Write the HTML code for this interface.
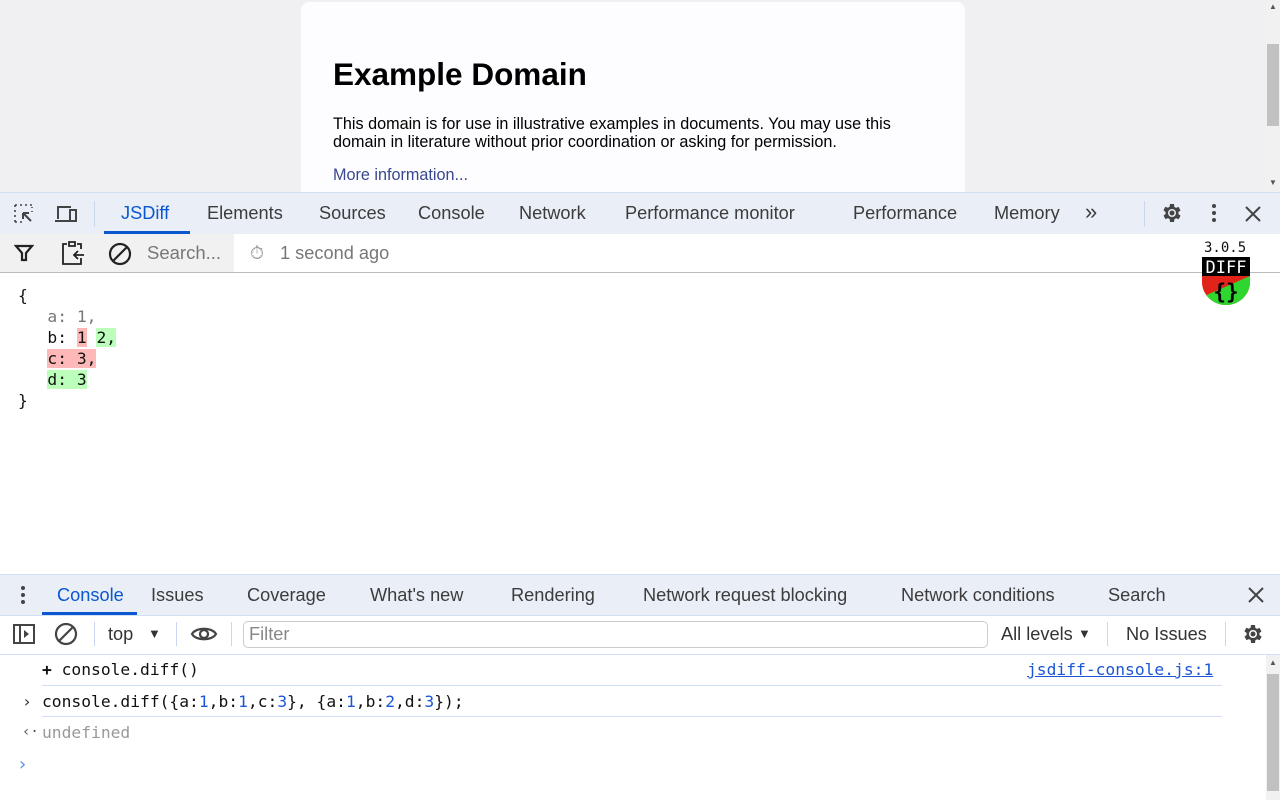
<!DOCTYPE html>
<html><head><meta charset="utf-8"><style>
*{margin:0;padding:0;box-sizing:border-box}
body{width:1280px;height:800px;overflow:hidden;position:relative;background:#fff;font-family:"Liberation Sans",sans-serif;color:#1f1f1f}
.a{position:absolute;white-space:nowrap}
.mono{font-family:"DejaVu Sans Mono","Liberation Mono",monospace;font-size:16.3px}
.tab{position:absolute;font-size:18.2px;color:#3c3c3c;top:0;line-height:40px}
svg{position:absolute}
</style></head><body>
<div class="a" style="left:0;top:0;width:1280px;height:193px;background:#f0f0f2"></div>
<div class="a" style="left:301px;top:2px;width:664px;height:200px;background:#fdfdff;border-radius:8px"></div>
<div class="a" style="left:333px;top:56px;font-size:31.5px;font-weight:bold;color:#000">Example Domain</div>
<div class="a" style="left:333px;top:115px;font-size:16.2px;line-height:18px;color:#000">This domain is for use in illustrative examples in documents. You may use this<br>domain in literature without prior coordination or asking for permission.</div>
<div class="a" style="left:333px;top:166px;font-size:16.2px;color:#38488f">More information...</div>
<div class="a" style="left:1266px;top:0;width:14px;height:193px;background:#f1f1f1"></div>
<div class="a" style="left:1267px;top:44px;width:12px;height:82px;background:#c1c1c1"></div>
<div class="a" style="left:1269px;top:2px;font-size:8px;color:#555">▲</div>
<div class="a" style="left:1269px;top:178px;font-size:8px;color:#555">▼</div>
<div class="a" style="left:0;top:192px;width:1280px;height:42px;background:#e9eef7;border-top:1px solid #d1e0f7"></div>
<svg style="left:12px;top:202px" width="24" height="24" viewBox="0 0 24 24" fill="none" stroke="#444" stroke-width="2"><path d="M3 3h2M8 3h2M13 3h2M18 3h2M3 3v2M3 8v2M3 13v2M3 18v2M3 20h2M8 20h2M20 5v1M20 9v1" stroke-width="1.6"/><path d="M11 11l8 8M11 11h6M11 11v6"/></svg>
<svg style="left:54px;top:202px" width="26" height="24" viewBox="0 0 26 24" fill="none" stroke="#444" stroke-width="2"><path d="M4 17V5h13M1 19h14"/><rect x="16" y="8" width="6" height="11"/></svg>
<div class="a" style="left:94px;top:201px;width:1px;height:26px;background:#cbd7ef"></div>
<div class="tab" style="left:121px;top:193px;color:#0b57d0">JSDiff</div>
<div class="a" style="left:104px;top:231px;width:86px;height:3px;background:#0b57d0"></div>
<div class="tab" style="left:207px;top:193px">Elements</div>
<div class="tab" style="left:319px;top:193px">Sources</div>
<div class="tab" style="left:418px;top:193px">Console</div>
<div class="tab" style="left:519px;top:193px">Network</div>
<div class="tab" style="left:625px;top:193px">Performance monitor</div>
<div class="tab" style="left:853px;top:193px">Performance</div>
<div class="tab" style="left:994px;top:193px">Memory</div>
<div class="tab" style="left:1085px;top:192px;font-size:22px;letter-spacing:-3px">»</div>
<div class="a" style="left:1144px;top:201px;width:1px;height:26px;background:#cbd7ef"></div>
<svg style="left:1160px;top:201px" width="24" height="24" viewBox="0 0 24 24"><path fill="#444" d="M19.4 13a7.5 7.5 0 000-2l2.1-1.6-2-3.5-2.5 1a7.6 7.6 0 00-1.7-1L15 3h-4l-.4 2.7a7.6 7.6 0 00-1.7 1l-2.5-1-2 3.5L6.6 11a7.5 7.5 0 000 2l-2.1 1.6 2 3.5 2.5-1a7.6 7.6 0 001.7 1L11 21h4l.4-2.7a7.6 7.6 0 001.7-1l2.5 1 2-3.5zM13 16a4 4 0 110-8 4 4 0 010 8z" transform="translate(-1 0)"/><circle cx="12" cy="12" r="2.5" fill="#444"/></svg>
<svg style="left:1204px;top:203px" width="20" height="20"><circle cx="10" cy="3" r="2" fill="#444"/><circle cx="10" cy="10" r="2" fill="#444"/><circle cx="10" cy="17" r="2" fill="#444"/></svg>
<svg style="left:1244px;top:205px" width="18" height="18" stroke="#444" stroke-width="2"><path d="M2 2l14 14M16 2L2 16"/></svg>
<div class="a" style="left:0;top:234px;width:234px;height:38px;background:#f1f1f1"></div>
<div class="a" style="left:0;top:272px;width:1280px;height:1px;background:#bbb"></div>
<svg style="left:14px;top:243px" width="20" height="20" fill="none" stroke="#222" stroke-width="2.2"><path d="M2 3h16l-6 7v7h-4v-7z"/></svg>
<svg style="left:60px;top:240px" width="26" height="26" fill="none" stroke="#222" stroke-width="1.8"><path d="M7 4H3v20h18v-6M17 4h4v5M9 2h6v4H9z"/><path d="M24 15h-9M18 11l-4 4 4 4"/></svg>
<svg style="left:108px;top:242px" width="24" height="24" fill="none" stroke="#222" stroke-width="2.2"><circle cx="12" cy="12" r="10"/><path d="M5 19L19 5"/></svg>
<div class="a" style="left:147px;top:242px;font-size:18.5px;color:#777">Search...</div>
<div class="a" style="left:250px;top:243px;font-size:18px;color:#999">⏱</div>
<div class="a" style="left:280px;top:243px;font-size:18.2px;color:#777">1 second ago</div>
<div class="a mono" style="left:1204px;top:240px;font-size:14px;color:#111">3.0.5</div>
<svg style="left:1202px;top:257px" width="48" height="48"><defs><clipPath id="sh"><path d="M0 19h48v6a24 23 0 01-48 0z"/></clipPath></defs><g clip-path="url(#sh)"><rect x="0" y="19" width="48" height="30" fill="#e2231a"/><path d="M48 19L0 40V48H48z" fill="#2fd62f"/></g><rect x="0" y="0" width="48" height="19" fill="#000"/><text x="24" y="16" font-family="DejaVu Sans Mono,monospace" font-size="17" fill="#fff" text-anchor="middle">DIFF</text><text x="24" y="42" font-family="DejaVu Sans Mono,monospace" font-size="21" font-weight="bold" fill="#000" text-anchor="middle">{}</text></svg>
<div class="a mono" style="left:18px;top:285px;line-height:21px;color:#111">{<br>
&nbsp;&nbsp;&nbsp;<span style="color:#777">a: 1,</span><br>
&nbsp;&nbsp;&nbsp;b: <span style="background:#ffb8b8">1</span> <span style="background:#bfb">2,</span><br>
&nbsp;&nbsp;&nbsp;<span style="background:#ffb8b8">c: 3,</span><br>
&nbsp;&nbsp;&nbsp;<span style="background:#bfb">d: 3</span><br>}</div>
<div class="a" style="left:0;top:574px;width:1280px;height:41px;background:#e9eef7;border-top:1px solid #d1e0f7"></div>
<svg style="left:18px;top:585px" width="10" height="20"><circle cx="5" cy="3" r="2" fill="#444"/><circle cx="5" cy="10" r="2" fill="#444"/><circle cx="5" cy="17" r="2" fill="#444"/></svg>
<div class="tab" style="left:57px;top:575px;color:#0b57d0">Console</div>
<div class="a" style="left:42px;top:612px;width:95px;height:3px;background:#0b57d0"></div>
<div class="tab" style="left:151px;top:575px">Issues</div>
<div class="tab" style="left:247px;top:575px">Coverage</div>
<div class="tab" style="left:370px;top:575px">What's new</div>
<div class="tab" style="left:511px;top:575px">Rendering</div>
<div class="tab" style="left:643px;top:575px">Network request blocking</div>
<div class="tab" style="left:901px;top:575px">Network conditions</div>
<div class="tab" style="left:1108px;top:575px">Search</div>
<svg style="left:1247px;top:586px" width="18" height="18" stroke="#444" stroke-width="2"><path d="M2 2l14 14M16 2L2 16"/></svg>
<div class="a" style="left:0;top:615px;width:1280px;height:40px;background:#fff;border-top:1px solid #d1e0f7;border-bottom:1px solid #d1e0f7"></div>
<svg style="left:13px;top:623px" width="22" height="22" fill="none" stroke="#444" stroke-width="2"><rect x="1" y="2" width="20" height="18"/><path d="M7 2v18"/><path d="M11 7l5 4-5 4z" fill="#444" stroke="none"/></svg>
<svg style="left:54px;top:622px" width="24" height="24" fill="none" stroke="#444" stroke-width="2.2"><circle cx="12" cy="12" r="10"/><path d="M5 19L19 5"/></svg>
<div class="a" style="left:94px;top:622px;width:1px;height:24px;background:#cbd7ef"></div>
<div class="a" style="left:108px;top:624px;font-size:18.2px;color:#333">top</div>
<div class="a" style="left:148px;top:626px;font-size:13px;color:#333">▼</div>
<div class="a" style="left:176px;top:622px;width:1px;height:24px;background:#cbd7ef"></div>
<svg style="left:190px;top:624px" width="28" height="20" fill="none" stroke="#444" stroke-width="2.2"><path d="M2 10C6 3 22 3 26 10C22 17 6 17 2 10z"/><circle cx="14" cy="10" r="4"/></svg>
<div class="a" style="left:231px;top:622px;width:1px;height:24px;background:#cbd7ef"></div>
<div class="a" style="left:243px;top:621px;width:745px;height:27px;border:1px solid #ccc;border-radius:5px"></div>
<div class="a" style="left:249px;top:624px;font-size:18.2px;color:#888">Filter</div>
<div class="a" style="left:1001px;top:624px;font-size:18.2px;color:#333">All levels</div>
<div class="a" style="left:1078px;top:626px;font-size:13px;color:#333">▼</div>
<div class="a" style="left:1107px;top:622px;width:1px;height:24px;background:#cbd7ef"></div>
<div class="a" style="left:1126px;top:624px;font-size:18.2px;color:#333">No Issues</div>
<div class="a" style="left:1225px;top:622px;width:1px;height:24px;background:#cbd7ef"></div>
<svg style="left:1241px;top:622px" width="24" height="24" viewBox="0 0 24 24"><path fill="#444" d="M19.4 13a7.5 7.5 0 000-2l2.1-1.6-2-3.5-2.5 1a7.6 7.6 0 00-1.7-1L15 3h-4l-.4 2.7a7.6 7.6 0 00-1.7 1l-2.5-1-2 3.5L6.6 11a7.5 7.5 0 000 2l-2.1 1.6 2 3.5 2.5-1a7.6 7.6 0 001.7 1L11 21h4l.4-2.7a7.6 7.6 0 001.7-1l2.5 1 2-3.5zM13 16a4 4 0 110-8 4 4 0 010 8z" transform="translate(-1 0)"/><circle cx="12" cy="12" r="2.5" fill="#444"/></svg>
<div class="a mono" style="left:42px;top:660px;color:#111"><b>+</b> console.diff()</div>
<div class="a mono" style="left:1027px;top:660px;color:#1a56d6;text-decoration:underline">jsdiff-console.js:1</div>
<div class="a" style="left:42px;top:685px;width:1180px;height:1px;background:#d1e0f7"></div>
<div class="a mono" style="left:22px;top:692px;color:#333">›</div>
<div class="a mono" style="left:42px;top:692px;color:#111">console.diff({a:<span style="color:#1a56d6">1</span>,b:<span style="color:#1a56d6">1</span>,c:<span style="color:#1a56d6">3</span>}, {a:<span style="color:#1a56d6">1</span>,b:<span style="color:#1a56d6">2</span>,d:<span style="color:#1a56d6">3</span>});</div>
<div class="a" style="left:42px;top:716px;width:1180px;height:1px;background:#d1e0f7"></div>
<div class="a mono" style="left:22px;top:724px;color:#555;font-size:14px">‹·</div>
<div class="a mono" style="left:42px;top:723px;color:#999">undefined</div>
<div class="a mono" style="left:17px;top:754px;color:#5b8def;font-size:18px">›</div>
<div class="a" style="left:1266px;top:655px;width:14px;height:145px;background:#f1f1f1"></div>
<div class="a" style="left:1267px;top:674px;width:12px;height:117px;background:#c1c1c1"></div>
<div class="a" style="left:1269px;top:658px;font-size:8px;color:#555">▲</div>
</body></html>
